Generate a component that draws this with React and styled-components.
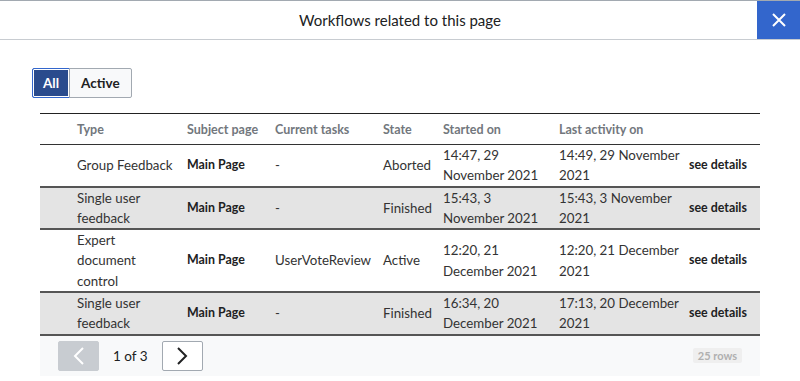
import React from "react"
import styled, { createGlobalStyle } from "styled-components"

const GlobalStyle = createGlobalStyle`
    html, body {
        margin: 0;
        padding: 0;
        background: #ffffff;
        font-family: Lato, "Noto Sans", "Liberation Sans", sans-serif;
        color: #202122;
    }
`

const Dialog = styled.div`
    width: 800px;
    height: 381px;
    background: #ffffff;
    border-top: 1px solid #a2a9b1;
    box-sizing: border-box;
    overflow: hidden;
`

const Header = styled.div`
    display: flex;
    align-items: center;
    height: 38px;
    border-bottom: 1px solid #c8ccd1;
`

const Title = styled.div`
    flex: 1;
    text-align: center;
    font-size: 15px;
    padding-left: 43px;
    color: #202122;
`

const CloseButton = styled.button`
    width: 43px;
    height: 38px;
    border: none;
    padding: 0;
    background: #3366cc;
    display: flex;
    align-items: center;
    justify-content: center;
    cursor: pointer;
`

const Body = styled.div`
    padding: 28px 40px 0 40px;
`

const ToggleGroup = styled.div`
    display: inline-flex;
    margin-left: -8px;
    margin-bottom: 15px;
`

const Toggle = styled.button`
    height: 30px;
    padding: 0 ${(p) => (p.$active ? "10px" : "11px")};
    font-family: Lato, "Liberation Sans", sans-serif;
    font-size: 13.5px;
    font-weight: bold;
    border: 1px solid ${(p) => (p.$active ? "#3366cc" : "#a2a9b1")};
    background: ${(p) => (p.$active ? "#2a4b8d" : "#f8f9fa")};
    color: ${(p) => (p.$active ? "#ffffff" : "#202122")};
    box-shadow: ${(p) => (p.$active ? "inset 0 0 0 1px #ffffff" : "none")};
    border-radius: ${(p) => (p.$active ? "2px 0 0 2px" : "0 2px 2px 0")};
    margin-left: ${(p) => (p.$active ? "0" : "-1px")};
    cursor: pointer;
`

const Table = styled.table`
    width: 720px;
    border-collapse: collapse;
    table-layout: fixed;
    border-top: 1px solid #222222;
`

const HeadCell = styled.th`
    height: 30px;
    padding: 0 3px 0 0;
    text-align: left;
    font-size: 12.5px;
    font-weight: bold;
    color: #72777d;
    border-bottom: 1px solid #333333;
    &:first-child {
        padding-left: 37px;
    }
`

const Row = styled.tr`
    background: ${(p) => (p.$shaded ? "#e4e4e4" : "#ffffff")};
    border-bottom: 2px solid #555555;
`

const Cell = styled.td`
    padding: 0 ${(p) => p.$padRight || 3}px 0 0;
    font-size: 13.3px;
    line-height: 20.3px;
    vertical-align: middle;
    color: #333333;
    font-weight: normal;
    ${(p) => p.$bold && "font-weight: bold; font-size: 12.4px; color: #202122;"}
    &:first-child {
        padding-left: 37px;
    }
`

const Footer = styled.div`
    width: 720px;
    height: 40px;
    background: #f8f9fa;
    display: flex;
    align-items: center;
    padding: 0 18px;
    box-sizing: border-box;
`

const PageButton = styled.button`
    width: 41px;
    height: 30px;
    padding: 0;
    display: flex;
    align-items: center;
    justify-content: center;
    border-radius: 2px;
    border: 1px solid ${(p) => (p.disabled ? "#c8ccd1" : "#a2a9b1")};
    background: ${(p) => (p.disabled ? "#c8ccd1" : "#ffffff")};
    cursor: ${(p) => (p.disabled ? "default" : "pointer")};
`

const PageLabel = styled.span`
    font-size: 13.5px;
    color: #202122;
    margin: 0 14px;
`

const RowCount = styled.span`
    margin-left: auto;
    padding: 1px 5px;
    border-radius: 2px;
    background: #efefef;
    color: #b0b0b0;
    font-size: 11px;
    font-weight: bold;
`

const Chevron = ({ dir, color }) => (
    <svg width="12" height="18" viewBox="0 0 12 18">
        <polyline
            points={dir === "left" ? "10,1 2,9 10,17" : "2,1 10,9 2,17"}
            fill="none"
            stroke={color}
            strokeWidth="2"
        />
    </svg>
)

const columns = [
    { label: "Type", width: 147 },
    { label: "Subject page", width: 88 },
    { label: "Current tasks", width: 108 },
    { label: "State", width: 60 },
    { label: "Started on", width: 116 },
    { label: "Last activity on", width: 130 },
    { label: "", width: 71 },
]

const rows = [
    {
        type: "Group Feedback",
        task: "-",
        state: "Aborted",
        started: "14:47, 29 November 2021",
        last: "14:49, 29 November 2021",
    },
    {
        type: "Single user feedback",
        task: "-",
        state: "Finished",
        started: "15:43, 3 November 2021",
        last: "15:43, 3 November 2021",
    },
    {
        type: "Expert document control",
        task: "UserVoteReview",
        state: "Active",
        started: "12:20, 21 December 2021",
        last: "12:20, 21 December 2021",
    },
    {
        type: "Single user feedback",
        task: "-",
        state: "Finished",
        started: "16:34, 20 December 2021",
        last: "17:13, 20 December 2021",
    },
]

export default function App() {
    return (
        <>
            <GlobalStyle />
            <Dialog>
                <Header>
                    <Title>Workflows related to this page</Title>
                    <CloseButton aria-label="Close">
                        <svg width="16" height="16" viewBox="0 0 16 16">
                            <path d="M2 2 L14 14 M14 2 L2 14" stroke="#ffffff" strokeWidth="2" />
                        </svg>
                    </CloseButton>
                </Header>
                <Body>
                    <ToggleGroup>
                        <Toggle $active>All</Toggle>
                        <Toggle>Active</Toggle>
                    </ToggleGroup>
                    <Table>
                        <colgroup>
                            {columns.map((c, i) => (
                                <col key={i} style={{ width: c.width }} />
                            ))}
                        </colgroup>
                        <thead>
                            <tr>
                                {columns.map((c, i) => (
                                    <HeadCell key={i}>{c.label}</HeadCell>
                                ))}
                            </tr>
                        </thead>
                        <tbody>
                            {rows.map((r, i) => (
                                <Row key={i} $shaded={i % 2 === 1}>
                                    <Cell $padRight={10}>{r.type}</Cell>
                                    <Cell $bold>Main Page</Cell>
                                    <Cell>{r.task}</Cell>
                                    <Cell>{r.state}</Cell>
                                    <Cell $padRight={10}>{r.started}</Cell>
                                    <Cell>{r.last}</Cell>
                                    <Cell $bold>see details</Cell>
                                </Row>
                            ))}
                        </tbody>
                    </Table>
                    <Footer>
                        <PageButton disabled>
                            <Chevron dir="left" color="#ffffff" />
                        </PageButton>
                        <PageLabel>1 of 3</PageLabel>
                        <PageButton>
                            <Chevron dir="right" color="#202122" />
                        </PageButton>
                        <RowCount>25 rows</RowCount>
                    </Footer>
                </Body>
            </Dialog>
        </>
    )
}
